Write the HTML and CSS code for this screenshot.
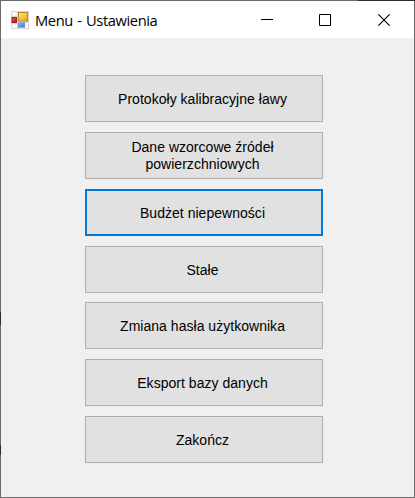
FILE: index.html
```
<!DOCTYPE html>
<html lang="pl">
<head>
<meta charset="utf-8">
<title>Menu - Ustawienia</title>
<link rel="stylesheet" href="styles.css">
</head>
<body>
<div class="window">
  <header class="titlebar">
    <svg class="app-icon" width="18" height="18" viewBox="0 0 18 18">
      <defs>
        <linearGradient id="gold" x1="0" y1="0" x2="1" y2="1"><stop offset="0" stop-color="#ffe98a"/><stop offset="1" stop-color="#e9a800"/></linearGradient>
        <linearGradient id="red" x1="0" y1="0" x2="1" y2="1"><stop offset="0" stop-color="#e06a60"/><stop offset="1" stop-color="#a80d0d"/></linearGradient>
        <linearGradient id="blue" x1="0" y1="0" x2="1" y2="1"><stop offset="0" stop-color="#8dbcff"/><stop offset="1" stop-color="#3473df"/></linearGradient>
      </defs>
      <rect x="0" y="0" width="18" height="18" fill="#d6d6d6"/>
      <path d="M1 1h5v4H1zM1 13h5v4H1zM14 12h3v5h-3z" fill="#f7f7f7"/>
      <rect x="7.5" y="1.5" width="9" height="8.5" fill="url(#gold)" stroke="#bd8620"/>
      <rect x="1" y="6.5" width="4.5" height="5" fill="url(#red)" stroke="#9c2020"/>
      <rect x="7.5" y="12" width="6" height="4" fill="url(#blue)" stroke="#5b8fdf"/>
    </svg>
    <h1 class="title">Menu - Ustawienia</h1>
    <div class="controls">
      <svg width="12" height="12" viewBox="0 0 12 12"><path d="M0 5.5h12" stroke="#000"/></svg>
      <svg width="12" height="12" viewBox="0 0 12 12"><path d="M.5 .5h11v11H.5z" fill="none" stroke="#000"/></svg>
      <svg class="close" width="12" height="12" viewBox="0 0 12 12"><path d="M.3 .3l11.4 11.4M11.7 .3L.3 11.7" stroke="#000" stroke-width="1.1"/></svg>
    </div>
  </header>
  <main class="menu">
    <button class="item">Protokoły kalibracyjne ławy</button>
    <button class="item item-two-line">Dane wzorcowe źródeł<br>powierzchniowych</button>
    <button class="item item-focused">Budżet niepewności</button>
    <button class="item item-short-gap">Stałe</button>
    <button class="item">Zmiana hasła użytkownika</button>
    <button class="item">Eksport bazy danych</button>
    <button class="item">Zakończ</button>
  </main>
  <i class="edge edge-top"></i>
  <i class="edge edge-left-upper"></i>
  <i class="edge edge-left-lower"></i>
</div>
</body>
</html>
```
FILE: styles.css
```
* {
  box-sizing: border-box;
}

body {
  margin: 0;
  overflow: hidden;
}

.window {
  position: relative;
  width: 415px;
  height: 498px;
  border: 1px solid #6b6b6b;
  background: #f0f0f0;
}

.titlebar {
  display: flex;
  align-items: center;
  height: 37px;
  padding: 0 24px 0 10px;
  background: #fff;
}

.app-icon {
  flex: none;
}

.title {
  margin: 0 0 0 6px;
  font: 400 14.7px/20px "Open Sans", "Noto Sans", sans-serif;
  letter-spacing: -0.4px;
  word-spacing: 1px;
  white-space: nowrap;
  color: #000;
}

.controls {
  display: flex;
  gap: 46px;
  margin-left: auto;
}

.controls svg {
  display: block;
}

.controls .close {
  margin-left: 1px;
}

.menu {
  display: flex;
  flex-direction: column;
  padding: 37px 0 0 84px;
}

.item {
  width: 238px;
  height: 47px;
  margin: 0 0 10px;
  padding: 2px 3px 0 0;
  border: 1px solid #adadad;
  background: #e1e1e1;
  color: #000;
  font: 14px/17px "Liberation Sans", Arial, sans-serif;
  letter-spacing: 0.03px;
  text-align: center;
}

.item-two-line {
  padding-top: 0;
}

.item-focused {
  border: 2px solid #0078d7;
}

.item-short-gap {
  margin-bottom: 9px;
}

.edge {
  position: absolute;
  background: #2e2c2e;
}

.edge-top {
  top: -1px;
  right: -1px;
  width: 57px;
  height: 1px;
}

.edge-left-upper {
  left: -1px;
  top: 311px;
  width: 1px;
  height: 13px;
}

.edge-left-lower {
  left: -1px;
  top: 444px;
  width: 1px;
  height: 10px;
}
```
